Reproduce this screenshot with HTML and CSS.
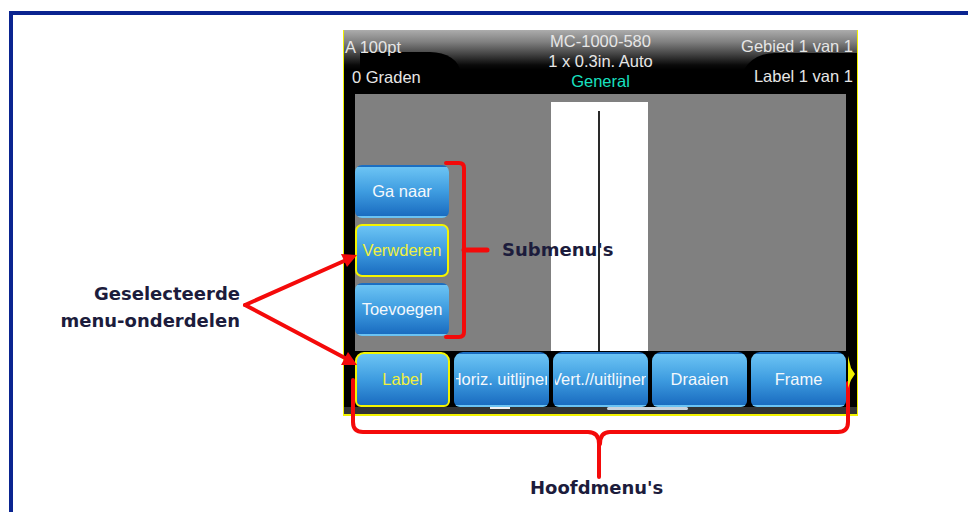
FILE: index.html
```html
<!DOCTYPE html>
<html lang="nl">
<head>
  <meta charset="UTF-8" />
  <title>Menu's</title>
  <link rel="stylesheet" href="styles.css">
</head>
<body>
  <div class="frame">
    <div class="screen">
      <div class="hdr">
        <div class="hdr-left">
          <span>A 100pt</span>
          <span class="ind">0 Graden</span>
        </div>
        <div class="hdr-mid">
          <span>MC-1000-580</span>
          <span>1 x 0.3in. Auto</span>
          <span class="cyan">General</span>
        </div>
        <div class="hdr-right">
          <span>Gebied 1 van 1</span>
          <span>Label 1 van 1</span>
        </div>
      </div>

      <div class="work">
        <div class="canvas">
          <div class="submenu">
            <div class="btn">Ga naar</div>
            <div class="btn sel">Verwderen</div>
            <div class="btn">Toevoegen</div>
          </div>
          <div class="strip"><div class="cursor"></div></div>
        </div>
      </div>

      <div class="tabs">
        <div class="btn tab sel">Label</div>
        <div class="btn tab">Horiz. uitlijnen</div>
        <div class="btn tab">Vert.//uitlijnen</div>
        <div class="btn tab">Draaien</div>
        <div class="btn tab">Frame</div>
      </div>

      <div class="foot">
        <span class="foot-w"></span>
        <span class="foot-g"></span>
      </div>
    </div>
  </div>

  <!-- annotaties -->
  <svg class="notes" width="968" height="512" viewBox="0 0 968 512">
    <g fill="none" stroke="#f40a0a" stroke-width="4" stroke-linecap="round" stroke-linejoin="round">
      <path d="M446 163 H459 Q464 163 464 168 V332 Q464 337 459 337 H446" />
      <path d="M464 250 H487" stroke-width="5" />
      <path d="M245 305 L344 261" />
      <path d="M245 305 L345 358" />
      <path d="M353 380 V422 Q353 432 363 432 H588 Q599 432 599 444 V477" />
      <path d="M848 383 V422 Q848 432 838 432 H610 Q600 432 600 444" />
    </g>
    <g fill="#f40a0a">
      <polygon points="357,255 347,267 341,254" />
      <polygon points="357,365 341,365 348,352" />
    </g>
    <polygon fill="#f2f200" points="848,356 851,368 855,374 851,380 848,388" />
  </svg>

  <div class="note note-sel">Geselecteerde<br>menu-onderdelen</div>
  <div class="note note-sub">Submenu's</div>
  <div class="note note-main">Hoofdmenu's</div>
</body>
</html>
```

FILE: styles.css
```css
html, body { margin: 0; height: 100%; overflow: hidden; background: #fff; }

.frame { margin: 11px 0 0 9px; width: 1000px; height: 600px; border-top: 4px solid #0a2490; border-left: 4px solid #0a2490; }

.screen { margin: 15px 0 0 330px; width: 515px; box-sizing: border-box; border: 1px solid #f2f200; border-top: none; border-bottom-width: 2px; background: #000; font-family: "Liberation Sans", Arial, sans-serif; font-size: 16.5px; color: #e6e6e6; }

/* kopregel */
.hdr { position: relative; height: 64px; display: grid; grid-template-columns: 1fr 1fr 1fr; background: linear-gradient(#acacac 0, #808080 12px, #444 24px, #0a0a0a 35px, #000 40px); }
.hdr::before, .hdr::after { content: ""; position: absolute; background: #000; }
.hdr::before { left: 16px; top: 22px; width: 100px; height: 42px; border-top-right-radius: 30px 20px; }
.hdr::after { right: 0; top: 23px; width: 114px; height: 41px; border-top-left-radius: 32px 24px; }
.hdr > div { position: relative; z-index: 1; display: flex; flex-direction: column; line-height: 20px; white-space: nowrap; }
.hdr-left { padding: 7px 0 0 1px; gap: 10px; }
.hdr-left .ind { padding-left: 7px; }
.hdr-mid { align-items: center; padding-top: 1px; line-height: 21px; }
.hdr-right { align-items: flex-end; padding: 6px 4px 0 0; gap: 10px; }
.cyan { color: #18e0c0; }

/* werkvlak */
.work { padding: 0 11px; }
.canvas { height: 257px; background: #808080; display: flex; align-items: flex-start; }
.submenu { display: flex; flex-direction: column; gap: 6px; padding-top: 71px; }
.strip { margin: 8px 0 0 102px; width: 97px; height: 249px; background: #fff; }
.cursor { margin: 9px 0 0 47px; width: 2px; height: 240px; background: #2a2a2a; }

/* knoppen */
.btn { width: 94px; height: 53px; box-sizing: border-box; border: 2px solid transparent; border-radius: 7px; background: linear-gradient(#6cc4f4, #3e9ce0 50%, #1a6cc0); display: flex; align-items: center; justify-content: center; white-space: nowrap; overflow: hidden; color: #f4f8fc; }
.btn.sel { border-color: #f4f400; color: #f0f040; }

.tabs { height: 56px; display: flex; gap: 4px; padding: 1px 0 0 11px; box-sizing: border-box; }
.tab { width: 95px; height: 55px; border-radius: 9px 9px 6px 6px; }

.foot { height: 7px; background: #333; display: flex; align-items: flex-start; }
.foot-w { margin-left: 146px; width: 20px; height: 2px; background: #f0f0f0; }
.foot-g { margin-left: 97px; width: 81px; height: 3px; border-radius: 2px; background: #c8d2dc; }

/* annotaties */
.notes { position: absolute; left: 0; top: 0; }
.note { position: absolute; font-family: "DejaVu Sans", Verdana, sans-serif; font-weight: bold; font-size: 18px; color: #1c1c3c; white-space: nowrap; }
.note-sel { right: 728px; top: 280px; line-height: 27px; text-align: right; }
.note-sub { left: 502px; top: 239px; line-height: 22px; }
.note-main { left: 530px; top: 477px; line-height: 22px; }
```
